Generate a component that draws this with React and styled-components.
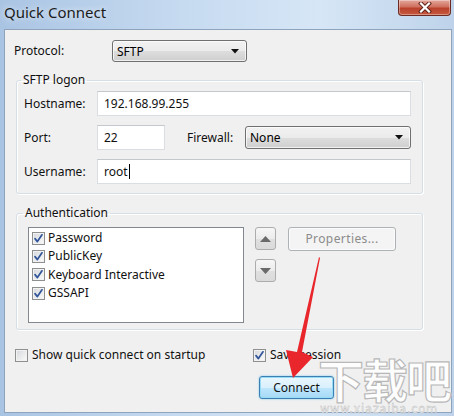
import React from 'react';
import styled, { createGlobalStyle } from 'styled-components';

const Global = createGlobalStyle`
  html, body { margin: 0; padding: 0; background: #fff; }
  body {
    font-family: "Noto Sans", "Open Sans", sans-serif;
    font-size: 12px;
    color: #000;
  }
  * { box-sizing: border-box; }
`;

const Window = styled.div`
  position: relative;
  width: 454px;
  height: 416px;
  display: flex;
  flex-direction: column;
  overflow: hidden;
  background: linear-gradient(to right, #a9c4e3 0%, #c3d8ef 35%, #d6e6f6 70%, #bed3ea 100%);
`;

const TitleBar = styled.div`
  height: 29px;
  display: flex;
  align-items: flex-start;
  flex: none;
`;

const Title = styled.div`
  padding: 2px 0 0 4px;
  font-size: 15px;
  line-height: 20px;
  color: #1b1b1b;
  text-shadow: 0 0 6px rgba(255, 255, 255, 0.9);
`;

const CloseButton = styled.div`
  margin-left: auto;
  margin-right: 3px;
  width: 53px;
  height: 16px;
  border: 1px solid #6d2a22;
  border-top: none;
  border-radius: 0 0 4px 4px;
  background: linear-gradient(to bottom, #e3a79c 0%, #d0705f 45%, #b9412c 55%, #c65a3f 100%);
  box-shadow: inset 0 0 0 1px rgba(255, 255, 255, 0.35);
  display: flex;
  align-items: center;
  justify-content: center;
`;

const Client = styled.div`
  flex: 1;
  margin: 0 2px 3px 4px;
  border: 1px solid #8ea4bd;
  background: #f0f0f0;
  display: flex;
  flex-direction: column;
`;

const ProtocolRow = styled.div`
  display: flex;
  align-items: center;
  margin: 10px 0 0 9px;
  height: 22px;
`;

const Label = styled.div`
  width: ${(p) => p.$w}px;
  flex: none;
  margin-left: ${(p) => p.$ml || 0}px;
  line-height: 16px;
  color: #101010;
`;

const Combo = styled.div`
  width: ${(p) => (p.$w ? `${p.$w}px` : 'auto')};
  flex: ${(p) => (p.$w ? 'none' : '1')};
  height: ${(p) => p.$h}px;
  border: 1px solid #707070;
  border-radius: 3px;
  background: linear-gradient(to bottom, #f2f2f2 0%, #ebebeb 50%, #dddddd 51%, #cfcfcf 100%);
  box-shadow: inset 0 0 0 1px rgba(255, 255, 255, 0.7);
  display: flex;
  align-items: center;
  padding: 0 7px 0 4px;
  justify-content: space-between;
`;

const Group = styled.fieldset`
  margin: ${(p) => p.$mt}px 0 0 11px;
  width: 407px;
  padding: 0;
  border: 1px solid #d5dfe5;
  border-radius: 3px;
  box-shadow: inset 1px 1px 0 #fff, 1px 1px 0 #fff;
`;

const Legend = styled.legend`
  margin-left: ${(p) => p.$ml}px;
  padding: 0 2px;
  line-height: 16px;
  font-size: 12px;
  color: #101010;
`;

const GroupBody = styled.div`
  padding: ${(p) => p.$pad};
  display: flex;
  flex-direction: ${(p) => p.$dir || 'column'};
  gap: ${(p) => p.$gap || 0}px;
`;

const FieldRow = styled.div`
  display: flex;
  align-items: center;
  height: 25px;
`;

const TextBox = styled.div`
  height: 25px;
  width: ${(p) => (p.$w ? `${p.$w}px` : 'auto')};
  flex: ${(p) => (p.$w ? 'none' : '1')};
  background: #fff;
  border: 1px solid #dadde2;
  border-top-color: #c4c7cc;
  padding: 0 6px;
  line-height: 22px;
  font-size: 12px;
  color: #111;
  display: flex;
  align-items: center;
`;

const Caret = styled.span`
  display: inline-block;
  width: 1px;
  height: 15px;
  background: #000;
  margin-left: 1px;
`;

const ListBox = styled.div`
  width: 216px;
  height: 96px;
  flex: none;
  background: #fff;
  border: 1px solid #828790;
  padding: 1px 3px;
`;

const ListItem = styled.div`
  height: 18.3px;
  display: flex;
  align-items: center;
  gap: 3px;
  line-height: 16px;
  color: #111;
`;

const Box = styled.span`
  width: 13px;
  height: 13px;
  flex: none;
  border: 1px solid #8e8f8f;
  background: linear-gradient(135deg, #d4d7db 0%, #f4f4f4 80%, #ffffff 100%);
  box-shadow: inset 0 0 0 1px #f2f2f2;
  display: inline-flex;
  align-items: center;
  justify-content: center;
`;

const SideColumn = styled.div`
  display: flex;
  flex-direction: column;
  gap: 9px;
  margin-left: 11px;
`;

const ArrowButton = styled.div`
  width: 21px;
  height: 23px;
  border: 1px solid #acacac;
  border-radius: 3px;
  background: linear-gradient(to bottom, #f6f6f6 0%, #ececec 50%, #e0e0e0 51%, #dadada 100%);
  display: flex;
  align-items: center;
  justify-content: center;
`;

const PlainButton = styled.div`
  width: ${(p) => p.$w}px;
  height: ${(p) => p.$h}px;
  margin-left: ${(p) => p.$ml || 0}px;
  border-radius: 3px;
  display: flex;
  align-items: center;
  justify-content: center;
  border: 1px solid ${(p) => (p.$primary ? '#3c7fb1' : '#adb2b5')};
  background: ${(p) =>
    p.$primary
      ? 'linear-gradient(to bottom, #eaf6fd 0%, #d9f0fc 50%, #bee6fd 51%, #a7d9f5 100%)'
      : '#f4f4f4'};
  box-shadow: ${(p) =>
    p.$primary ? 'inset 0 0 0 1px #97dcf6, 0 0 2px #6fc3ee' : 'inset 0 0 0 1px #fbfbfb'};
  color: ${(p) => (p.$disabled ? '#8b8b8b' : '#111')};
  letter-spacing: ${(p) => (p.$disabled ? '0.4px' : '0')};
  line-height: 16px;
`;

const OptionsRow = styled.div`
  display: flex;
  align-items: center;
  margin: 18px 0 0 10px;
  height: 14px;
`;

const CheckOption = styled.div`
  display: flex;
  align-items: center;
  gap: 4px;
  width: ${(p) => (p.$w ? `${p.$w}px` : 'auto')};
  line-height: 16px;
  color: #111;
`;

const ButtonRow = styled.div`
  display: flex;
  margin: 14px 0 0 254px;
`;

const Watermark = styled.div`
  position: absolute;
  left: 318px;
  top: 354px;
  width: 136px;
  display: flex;
  flex-direction: column;
  align-items: flex-start;
  pointer-events: none;
`;

const WatermarkChars = styled.div`
  font-family: "Noto Sans CJK SC", sans-serif;
  font-size: 46px;
  font-weight: 700;
  line-height: 48px;
  height: 48px;
  letter-spacing: -2px;
  white-space: nowrap;
  color: #fdfdfd;
  -webkit-text-stroke: 1.2px #b8b8b8;
  text-shadow: 0 0 2px #fff;
`;

const WatermarkUrl = styled.div`
  font-family: "DejaVu Sans", sans-serif;
  font-size: 11.5px;
  line-height: 12px;
  margin: 1px 0 0 2px;
  color: #f8f8f8;
  -webkit-text-stroke: 0.4px #b5b5b5;
  letter-spacing: 0.7px;
  white-space: nowrap;
`;

const Overlay = styled.svg`
  position: absolute;
  left: 0;
  top: 0;
  pointer-events: none;
`;

const Check = () => (
  <svg width="11" height="11" viewBox="0 0 11 11">
    <path d="M2 5.6 L4.4 8.6 L9 1.8" fill="none" stroke="#31559a" strokeWidth="1.7" strokeLinecap="round" strokeLinejoin="round" />
  </svg>
);

const CheckBox = ({ checked }) => <Box>{checked && <Check />}</Box>;

const DownTri = () => (
  <svg width="8" height="5" viewBox="0 0 8 5">
    <path d="M0 0 L8 0 L4 4.5 Z" fill="#111" />
  </svg>
);

const methods = ['Password', 'PublicKey', 'Keyboard Interactive', 'GSSAPI'];

export default function App() {
  return (
    <>
      <Global />
      <Window>
        <TitleBar>
          <Title>Quick Connect</Title>
          <CloseButton>
            <svg width="14" height="11" viewBox="0 0 14 11">
              <path d="M3 1.5 L11 9.5 M11 1.5 L3 9.5" stroke="#5a1e16" strokeWidth="4" strokeLinecap="square" />
              <path d="M3 1.5 L11 9.5 M11 1.5 L3 9.5" stroke="#fff" strokeWidth="2.2" strokeLinecap="square" />
            </svg>
          </CloseButton>
        </TitleBar>
        <Client>
          <ProtocolRow>
            <Label $w={98}>Protocol:</Label>
            <Combo $w={135} $h={22}>
              <span>SFTP</span>
              <DownTri />
            </Combo>
          </ProtocolRow>

          <Group $mt={10}>
            <Legend $ml={4}>SFTP logon</Legend>
            <GroupBody $pad="3px 11px 9px 7px" $gap={9}>
              <FieldRow>
                <Label $w={73}>Hostname:</Label>
                <TextBox>192.168.99.255</TextBox>
              </FieldRow>
              <FieldRow>
                <Label $w={73}>Port:</Label>
                <TextBox $w={68}>22</TextBox>
                <Label $w={58} $ml={22}>Firewall:</Label>
                <Combo $h={23}>
                  <span>None</span>
                  <DownTri />
                </Combo>
              </FieldRow>
              <FieldRow>
                <Label $w={73}>Username:</Label>
                <TextBox>
                  root
                  <Caret />
                </TextBox>
              </FieldRow>
            </GroupBody>
          </Group>

          <Group $mt={11}>
            <Legend $ml={6}>Authentication</Legend>
            <GroupBody $pad="6px 0 6px 11px" $dir="row">
              <ListBox>
                {methods.map((m) => (
                  <ListItem key={m}>
                    <CheckBox checked />
                    {m}
                  </ListItem>
                ))}
              </ListBox>
              <SideColumn>
                <ArrowButton>
                  <svg width="11" height="6" viewBox="0 0 11 6">
                    <path d="M0 6 L11 6 L5.5 0 Z" fill="#6a6a6a" />
                  </svg>
                </ArrowButton>
                <ArrowButton>
                  <svg width="11" height="6" viewBox="0 0 11 6">
                    <path d="M0 0 L11 0 L5.5 6 Z" fill="#6a6a6a" />
                  </svg>
                </ArrowButton>
              </SideColumn>
              <PlainButton $w={108} $h={24} $ml={12} $disabled>
                Properties...
              </PlainButton>
            </GroupBody>
          </Group>

          <OptionsRow>
            <CheckOption $w={238}>
              <CheckBox />
              Show quick connect on startup
            </CheckOption>
            <CheckOption>
              <CheckBox checked />
              Save session
            </CheckOption>
          </OptionsRow>

          <ButtonRow>
            <PlainButton $w={75} $h={23} $primary>
              Connect
            </PlainButton>
          </ButtonRow>
        </Client>

        <Overlay width="454" height="416" viewBox="0 0 454 416">
          <polygon points="319,257 320,258 302,352 313,357 293,378 286,350 297,352" fill="#e8262b" />
        </Overlay>

        <Watermark>
          <WatermarkChars>下载吧</WatermarkChars>
          <WatermarkUrl>www.xiazaiba.com</WatermarkUrl>
        </Watermark>
      </Window>
    </>
  );
}
